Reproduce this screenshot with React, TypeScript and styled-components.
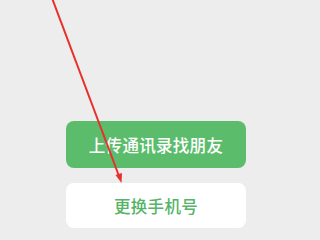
import React from "react";
import styled, { createGlobalStyle } from "styled-components";

const Global = createGlobalStyle`
  html, body { margin: 0; padding: 0; background: #ededed; }
  body { font-family: "Noto Sans CJK SC", "Noto Sans", sans-serif; }
`;

const Page = styled.div`
  position: relative;
  width: 320px;
  height: 240px;
  overflow: hidden;
  background: #ededed;
  display: flex;
  flex-direction: column;
  align-items: flex-start;
  padding: 121px 0 0 66px;
  box-sizing: border-box;
  gap: 15px;
`;

const Button = styled.button<{ $primary?: boolean }>`
  width: 180px;
  height: ${(p) => (p.$primary ? "47px" : "45px")};
  border: none;
  border-radius: 8px;
  background: ${(p) => (p.$primary ? "#5bbd6c" : "#ffffff")};
  color: ${(p) => (p.$primary ? "#ffffff" : "#55b468")};
  font-family: "Noto Sans CJK SC", "Noto Sans", sans-serif;
  font-size: 16.5px;
  font-weight: 500;
  letter-spacing: 0.3px;
  display: flex;
  align-items: center;
  justify-content: center;
  padding: 0;
`;

const Annotation = styled.svg`
  position: absolute;
  left: 0;
  top: 0;
  pointer-events: none;
`;

export default function App() {
  return (
    <>
      <Global />
      <Page>
        <Button $primary>上传通讯录找朋友</Button>
        <Button>更换手机号</Button>
        <Annotation width="320" height="240" viewBox="0 0 320 240">
          <line x1="52" y1="-2" x2="119" y2="176" stroke="#e8302a" strokeWidth="2" />
          <polygon points="121.5,183 115.5,175 122,173" fill="#e8302a" />
        </Annotation>
      </Page>
    </>
  );
}
